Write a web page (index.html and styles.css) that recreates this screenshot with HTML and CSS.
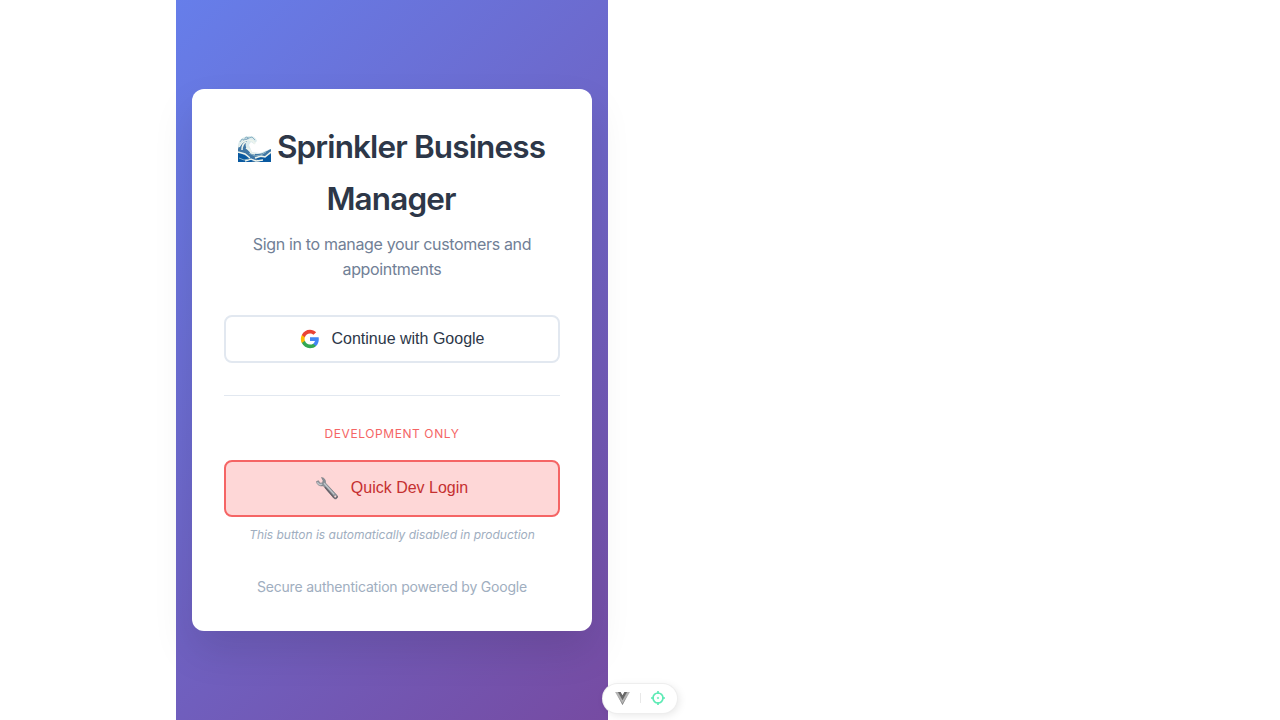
FILE: index.html
```html
<!DOCTYPE html>
<html lang="en">
<head>
<meta charset="utf-8">
<title>Sprinkler Business Manager</title>
<link rel="stylesheet" href="styles.css">
</head>
<body>
<main class="login">
  <section class="card">
    <h1 class="title"><span class="line"><svg class="wave" viewBox="0 0 34 34" aria-hidden="true">
      <path fill="#dcebed" d="M1 12C2 6 7 3 13 3c4 0 6 2 7 5l-3 3-3-2-2 3 3 7 8 1 5-2 5-2v12H1z"/>
      <path fill="#3f76a4" d="M1 16C3 10 7 6 12 5c-3 3-4 6-3 9 2 5 6 7 12 7 5 0 8-3 13-5v13H1z"/>
      <path fill="#0959a0" d="M1 18l6 4 6 2 5 3-4 2H1zM19 24l6 1 9-4v8H23z"/>
      <path fill="none" stroke="#edf4ed" stroke-width="1.6" d="M2 14c2-4 5-7 9-7M5 17c0-4 2-7 4-8M12 7l4 1 2 3M9 15l4 2 1 3 4 1M1 19l7 2 5 4M18 25l6-2 4 1 6-5M8 28l6-2 5 2 7-1"/>
      <path fill="none" stroke="#8bb3c5" d="M3 9l2-3 2 1 2-3 3 1 3-1 3 3M12 20l6 3 6-1 5-3M2 25l5 2 5-1"/>
    </svg>Sprinkler Business</span> <span class="line">Manager</span></h1>
    <p class="subtitle">Sign in to manage your customers and appointments</p>
    <button class="button google" type="button">
      <svg class="google-icon" viewBox="0 0 24 24" aria-hidden="true">
        <path fill="#4285F4" d="M22.56 12.25c0-.78-.07-1.53-.2-2.25H12v4.26h5.92c-.26 1.37-1.04 2.53-2.21 3.31v2.77h3.57c2.08-1.92 3.28-4.74 3.28-8.09z"/>
        <path fill="#34A853" d="M12 23c2.97 0 5.46-.98 7.28-2.66l-3.57-2.77c-.98.66-2.23 1.06-3.71 1.06-2.86 0-5.29-1.93-6.16-4.53H2.18v2.84C3.99 20.53 7.7 23 12 23z"/>
        <path fill="#FBBC05" d="M5.84 14.09c-.22-.66-.35-1.36-.35-2.09s.13-1.43.35-2.09V7.07H2.18C1.43 8.55 1 10.22 1 12s.43 3.45 1.18 4.93l2.85-2.22.81-.62z"/>
        <path fill="#EA4335" d="M12 5.38c1.62 0 3.06.56 4.21 1.64l3.15-3.15C17.45 2.09 14.97 1 12 1 7.7 1 3.99 3.47 2.18 7.07l3.66 2.84c.87-2.6 3.3-4.53 6.16-4.53z"/>
      </svg>
      <span>Continue with Google</span>
    </button>
    <div class="dev">
      <p class="dev-label">DEVELOPMENT ONLY</p>
      <button class="button quick" type="button">
        <svg class="wrench" viewBox="0 0 24 26" aria-hidden="true">
          <path fill="#8c9299" stroke="#747980" stroke-width=".6" d="M6.5 2.5c3 .4 4.4 2.6 4 5.5l11.3 12.1c2.2 2.3-.7 5.2-3 3.1L8.2 10.7C5 11.6 1.7 9.8 1.5 6.5l2-.8L5 8.2l2.6-.4.4-2.4z"/>
          <path fill="none" stroke="#c2c7cc" stroke-width="1.3" d="M9 8.2l10.2 11.2M2.4 7.3c.8 2 3 2.8 4.7 1.7"/>
          <path fill="none" stroke="#686168" stroke-width="1.3" d="M10 12.3l9 10.2c1.4 1.2 3.2.2 3.2-1.4"/>
          <circle cx="20.3" cy="21.6" r="1" fill="#fed7d7"/>
        </svg>
        <span>Quick Dev Login</span>
      </button>
      <p class="dev-note">This button is automatically disabled in production</p>
    </div>
    <p class="footer">Secure authentication powered by Google</p>
  </section>
</main>
<div class="devtools">
  <svg class="vue" viewBox="0 0 16 14" aria-hidden="true">
    <path fill="#b5b5b5" d="M0 0h3.3L8 8.2 12.7 0H16L8 14z"/>
    <path fill="#686868" d="M3 0h3l2 3.5L10 0h3L8 8.8z"/>
    <path fill="#858585" d="M3 4l5 8.5L13 4 8 14z"/>
  </svg>
  <span class="divider"></span>
  <svg class="target" viewBox="0 0 14 14" fill="none" stroke="#5eeab5" stroke-width="1.7" aria-hidden="true">
    <circle cx="7" cy="7" r="5"/><path d="M7 0v3M7 11v3M0 7h3M11 7h3"/><circle cx="7" cy="7" r=".8" fill="#5eeab5" stroke-width=".5"/>
  </svg>
</div>
</body>
</html>
```
FILE: styles.css
```css
* { box-sizing: border-box; margin: 0; }
body {
  min-height: 720px;
  overflow: hidden;
  background: #fff;
  font-family: Inter, sans-serif;
  line-height: 1.6;
}
.login {
  display: flex;
  align-items: center;
  justify-content: center;
  width: 432px;
  height: 720px;
  margin-left: 176px;
  background: linear-gradient(135deg, #667eea 0%, #764ba2 100%);
}
.card {
  width: 400px;
  height: 542px;
  padding: 32px;
  border-radius: 12px;
  background: #fff;
  box-shadow: 0 20px 40px rgba(0, 0, 0, .1);
  text-align: center;
}
.title { height: 104px; margin-bottom: 7px; padding-right: 2px; color: #2d3748; font-size: 31.5px; font-weight: 600; line-height: 51.5px; letter-spacing: -.87px; }
.line { display: block; white-space: nowrap; }
.wave { width: 34px; height: 34px; margin-right: 6px; vertical-align: -9px; }
.subtitle { height: 51px; margin-bottom: 32px; color: #718096; font-size: 16px; line-height: 25px; letter-spacing: -.34px; }
.button {
  display: flex;
  align-items: center;
  justify-content: center;
  gap: 12px;
  width: 100%;
  border-radius: 8px;
  font: 16px "Liberation Sans", Arial, sans-serif;
}
.google { height: 48px; border: 2px solid #e2e8f0; background: #fff; color: #2d3748; }
.google-icon { width: 20px; height: 20px; }
.dev { margin-top: 32px; padding-top: 28px; border-top: 1px solid #e2e8f0; }
.dev-label { margin-bottom: 16px; color: #f56565; font-size: 12px; line-height: 20px; letter-spacing: .58px; }
.quick { height: 57px; padding-bottom: 3px; padding-right: 7px; border: 2px solid #f56565; background: #fed7d7; color: #c53030; }
.wrench { width: 24px; height: 26px; }
.dev-note { margin-top: 8px; color: #a0aec0; font-size: 12px; font-style: italic; line-height: 20px; letter-spacing: -.02px; }
.footer { margin-top: 31px; color: #a0aec0; font-size: 14px; line-height: 22px; letter-spacing: -.2px; }
.devtools {
  position: absolute;
  top: 684px;
  left: 603px;
  display: flex;
  align-items: center;
  justify-content: center;
  gap: 10px;
  width: 74px;
  height: 29px;
  padding-bottom: 1px;
  border-radius: 15px;
  background: #fff;
  box-shadow: 0 0 0 1px #eee, 2px 2px 8px rgba(0, 0, 0, .1);
}
.vue { width: 15px; height: 13px; }
.divider { width: 1px; height: 10px; background: #e8e8e8; }
.target { width: 14px; height: 14px; }
```
